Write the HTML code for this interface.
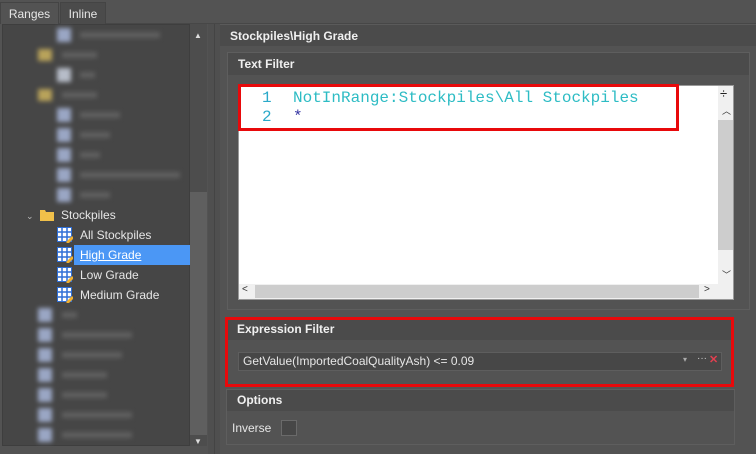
<!DOCTYPE html>
<html><head><style>
*{margin:0;padding:0;box-sizing:border-box}
body{width:756px;height:454px;background:#535353;font-family:"Liberation Sans",sans-serif;font-size:12px;color:#e6e6e6;position:relative;overflow:hidden}
.abs{position:absolute}
.tab{position:absolute;top:2px;height:22px;line-height:22px;text-align:center;border:1px solid #444;border-bottom:none}
.b{filter:blur(2.5px)}
.ico{position:absolute;width:16px;height:16px}
.hdr{position:absolute;background:#4b4b4b;font-weight:bold;color:#f0f0f0;font-size:12px}
.bi{position:absolute;width:14px;height:14px;background:#9aa6c4}
.bt{position:absolute;height:6px;background:#606060}
</style></head><body>
<div class="abs" style="left:0;top:23px;width:756px;height:1px;background:#474747"></div>
<div class="tab" style="left:0;width:59px;background:#535353">Ranges</div>
<div class="tab" style="left:60px;width:46px;background:#4b4b4b">Inline</div>
<!-- tree -->
<div class="abs" style="left:2px;top:24px;width:188px;height:422px;background:#464646;border:1px solid #3e3e3e"></div>
<div class="abs" style="left:190px;top:24px;width:17px;height:422px;background:#4d4d4d"></div>
<div class="abs" style="left:190px;top:192px;width:17px;height:243px;background:#5f5f5f"></div>
<div class="abs" style="left:194px;top:31px;color:#ddd;font-size:8px">▲</div>
<div class="abs" style="left:194px;top:437px;color:#ddd;font-size:8px">▼</div>
<div class="abs" style="left:208px;top:24px;width:12px;height:430px;background:#4f4f4f"></div>
<div class="abs" style="left:214px;top:24px;width:1px;height:430px;background:#444"></div>
<!-- blurred items -->
<div class="b">
<div class="bi" style="left:57px;top:28px"></div><div class="bt" style="left:80px;top:32px;width:80px"></div>
<div class="bi" style="left:38px;top:49px;background:#b9a35a;height:12px"></div><div class="bt" style="left:62px;top:52px;width:35px"></div>
<div class="bi" style="left:57px;top:68px;background:#b7bdc9"></div><div class="bt" style="left:80px;top:72px;width:15px"></div>
<div class="bi" style="left:38px;top:89px;background:#b9a35a;height:12px"></div><div class="bt" style="left:62px;top:92px;width:35px"></div>
<div class="bi" style="left:57px;top:108px"></div><div class="bt" style="left:80px;top:112px;width:40px"></div>
<div class="bi" style="left:57px;top:128px"></div><div class="bt" style="left:80px;top:132px;width:30px"></div>
<div class="bi" style="left:57px;top:148px"></div><div class="bt" style="left:80px;top:152px;width:20px"></div>
<div class="bi" style="left:57px;top:168px"></div><div class="bt" style="left:80px;top:172px;width:100px"></div>
<div class="bi" style="left:57px;top:188px"></div><div class="bt" style="left:80px;top:192px;width:30px"></div>
<div class="bi" style="left:38px;top:308px"></div><div class="bt" style="left:62px;top:312px;width:15px"></div>
<div class="bi" style="left:38px;top:328px"></div><div class="bt" style="left:62px;top:332px;width:70px"></div>
<div class="bi" style="left:38px;top:348px"></div><div class="bt" style="left:62px;top:352px;width:60px"></div>
<div class="bi" style="left:38px;top:368px"></div><div class="bt" style="left:62px;top:372px;width:45px"></div>
<div class="bi" style="left:38px;top:388px"></div><div class="bt" style="left:62px;top:392px;width:45px"></div>
<div class="bi" style="left:38px;top:408px"></div><div class="bt" style="left:62px;top:412px;width:70px"></div>
<div class="bi" style="left:38px;top:428px"></div><div class="bt" style="left:62px;top:432px;width:70px"></div>
</div>
<div class="abs" style="left:26px;top:211px;color:#bbb;font-size:9px">⌄</div>
<svg class="ico" style="left:39px;top:207px" viewBox="0 0 16 16"><path d="M1 3h5l1 2h8v9H1z" fill="#f0c04a"/></svg>
<div class="abs" style="left:61px;top:208px">Stockpiles</div>
<svg width="0" height="0"><defs><g id="g"><rect x="0.5" y="0.5" width="14" height="14" fill="#fff" stroke="#2f6fd6"/><path d="M0 5h15M0 10h15M5 0v15M10 0v15" stroke="#2f6fd6" stroke-width="1.5"/><path d="M9 15l6-6 2 2-6 6z" fill="#f0b030"/></g></defs></svg>
<svg class="ico" style="left:57px;top:227px"><use href="#g"/></svg>
<div class="abs" style="left:80px;top:228px">All Stockpiles</div>
<div class="abs" style="left:74px;top:245px;width:116px;height:20px;background:#4b97f5"></div>
<svg class="ico" style="left:57px;top:247px"><use href="#g"/></svg>
<div class="abs" style="left:80px;top:248px;color:#fff;text-decoration:underline">High Grade</div>
<svg class="ico" style="left:57px;top:267px"><use href="#g"/></svg>
<div class="abs" style="left:80px;top:268px">Low Grade</div>
<svg class="ico" style="left:57px;top:287px"><use href="#g"/></svg>
<div class="abs" style="left:80px;top:288px">Medium Grade</div>
<!-- right -->
<div class="hdr" style="left:220px;top:24px;width:536px;height:22px;line-height:22px;padding-left:10px;border-top:1px solid #5a5a5a">Stockpiles\High Grade</div>
<div class="abs" style="left:227px;top:52px;width:523px;height:258px;border:1px solid #5e5e5e"></div>
<div class="hdr" style="left:228px;top:53px;width:521px;height:22px;line-height:22px;padding-left:10px">Text Filter</div>
<div class="abs" style="left:238px;top:85px;width:496px;height:215px;background:#fff;border:1px solid #999"></div>
<div class="abs" style="left:718px;top:86px;width:15px;height:198px;background:#f0f0f0"></div>
<div class="abs" style="left:718px;top:120px;width:15px;height:130px;background:#cdcdcd"></div>
<div class="abs" style="left:720px;top:86px;color:#000;font-size:13px">÷</div>
<div class="abs" style="left:722px;top:104px;color:#333;font-size:9px">︿</div>
<div class="abs" style="left:722px;top:268px;color:#333;font-size:9px">﹀</div>
<div class="abs" style="left:239px;top:284px;width:494px;height:15px;background:#f0f0f0"></div>
<div class="abs" style="left:255px;top:285px;width:444px;height:13px;background:#cdcdcd"></div>
<div class="abs" style="left:242px;top:284px;color:#333;font-size:10px">&lt;</div>
<div class="abs" style="left:704px;top:284px;color:#333;font-size:10px">&gt;</div>
<div class="abs" style="left:238px;top:84px;width:441px;height:47px;border:3px solid #e8090b"></div>
<div class="abs" style="left:262px;top:89px;font-family:'Liberation Mono',monospace;font-size:16px;line-height:19px;color:#2aa9c9">1<br>2</div>
<div class="abs" style="left:293px;top:89px;font-family:'Liberation Mono',monospace;font-size:16px;line-height:19px;color:#2dbcc4">NotInRange:Stockpiles\All Stockpiles<br><span style="color:#3030a0">*</span></div>
<!-- expression -->
<div class="abs" style="left:225px;top:317px;width:509px;height:70px;border:3px solid #e8090b;background:#535353"></div>
<div class="hdr" style="left:228px;top:320px;width:503px;height:20px;line-height:19px;padding-left:9px">Expression Filter</div>
<div class="abs" style="left:238px;top:352px;width:484px;height:19px;background:#474747;border:1px solid #5e5e5e;line-height:17px;padding-left:4px;color:#e6e6e6">GetValue(ImportedCoalQualityAsh) &lt;= 0.09</div>
<div class="abs" style="left:683px;top:355px;color:#aaa;font-size:8px">▾</div>
<div class="abs" style="left:697px;top:353px;color:#ccc;font-size:10px">···</div>
<div class="abs" style="left:709px;top:353px;color:#e04050;font-size:11px;font-weight:bold">✕</div>
<!-- options -->
<div class="abs" style="left:226px;top:389px;width:509px;height:56px;border:1px solid #5e5e5e"></div>
<div class="hdr" style="left:227px;top:390px;width:507px;height:21px;line-height:20px;padding-left:10px">Options</div>
<div class="abs" style="left:232px;top:421px">Inverse</div>
<div class="abs" style="left:281px;top:420px;width:16px;height:16px;background:#474747;border:1px solid #6a6a6a"></div>
</body></html>
